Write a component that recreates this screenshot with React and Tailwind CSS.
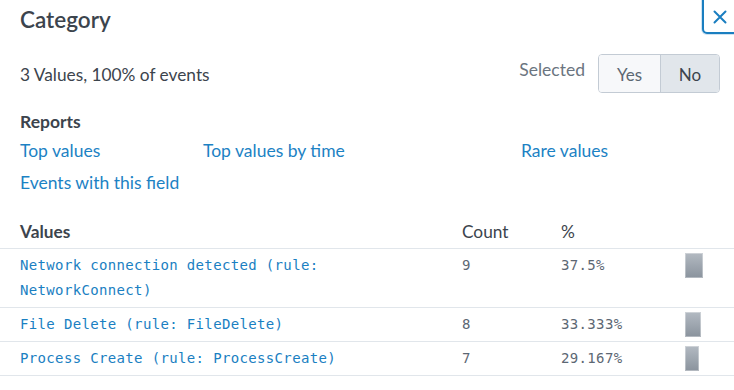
import React from "react";

const rows = [
  { label: ["Network connection detected (rule:", "NetworkConnect)"], count: 9, pct: "37.5%", value: 37.5 },
  { label: ["File Delete (rule: FileDelete)"], count: 8, pct: "33.333%", value: 33.333 },
  { label: ["Process Create (rule: ProcessCreate)"], count: 7, pct: "29.167%", value: 29.167 },
];

const sans = "font-['Lato','Open_Sans',sans-serif]";
const mono = "font-['DejaVu_Sans_Mono',monospace] text-[14px] tracking-[0.35px] leading-[25px]";

export default function App() {
  return (
    <div className={`relative w-[734px] h-[390px] overflow-hidden bg-white text-[#3c444d] ${sans}`}>
      {/* close button */}
      <button className="absolute top-[-4px] left-[702px] w-[40px] h-[38px] rounded-[5px] border-2 border-[#1a7ec0] bg-white flex items-center justify-center shadow-[0_0_0_1px_#cfe3f2]">
        <svg width="14" height="14" viewBox="0 0 14 14" className="-ml-[4px] mt-[4px]">
          <path d="M1.5 1.5 L12.5 12.5 M12.5 1.5 L1.5 12.5" stroke="#1a7ec0" strokeWidth="2" strokeLinecap="round" />
        </svg>
      </button>

      <div className="pl-[20px] pr-[14px]">
        <h2 className="pt-[7px] text-[22.5px] font-semibold leading-[26px]">Category</h2>

        <div className="mt-[21px] flex items-center justify-between">
          <div className="text-[17.3px] leading-[20px] mt-[2px]">3 Values, 100% of events</div>
          <div className="flex items-center">
            <span className="text-[17.5px] text-[#6b7580] mr-[13px] -mt-[6px]">Selected</span>
            <div className="flex h-[39px] rounded-[4px] border border-[#c3cbd4] overflow-hidden text-[17px]">
              <div className="w-[62px] flex items-center justify-center bg-[#f7f8fa] text-[#5c6773] border-r border-[#c3cbd4] pt-[2px]">Yes</div>
              <div className="w-[58px] flex items-center justify-center bg-[#e1e6eb] text-[#3c444d] pt-[2px]">No</div>
            </div>
          </div>
        </div>

        <div className="mt-[19px] text-[17.5px] font-bold leading-[20px]">Reports</div>
        <div className="mt-[9px] grid grid-cols-[183px_318px_1fr] text-[17.5px] leading-[20px] text-[#1c82c4]">
          <a>Top values</a>
          <a>Top values by time</a>
          <a>Rare values</a>
        </div>
        <div className="mt-[12px] text-[17.5px] leading-[20px] text-[#1c82c4]">Events with this field</div>
      </div>

      <div className="mt-[29px]">
        <div className="flex pl-[20px] pr-[14px] pb-[6px] border-b border-[#e1e6eb] text-[17.3px] leading-[20px]">
          <div className="w-[442px] font-bold">Values</div>
          <div className="w-[99px]">Count</div>
          <div>%</div>
        </div>
        {rows.map((r, i) => (
          <div key={i} className="flex items-start pl-[20px] pr-[14px] py-[4px] border-b border-[#e1e6eb]">
            <div className={`w-[442px] text-[#1a80c2] ${mono}`}>
              {r.label.map((l, j) => (
                <div key={j}>{l}</div>
              ))}
            </div>
            <div className={`w-[99px] text-[#5c6773] ${mono}`}>{r.count}</div>
            <div className={`w-[124px] text-[#5c6773] ${mono}`}>{r.pct}</div>
            <div
              className="h-[25px] bg-gradient-to-b from-[#b3bac2] to-[#8a939d] shadow-[inset_0_0_0_1px_rgba(255,255,255,0.35)]"
              style={{ width: Math.round(r.value * 0.48) + "px" }}
            />
          </div>
        ))}
      </div>
    </div>
  );
}
